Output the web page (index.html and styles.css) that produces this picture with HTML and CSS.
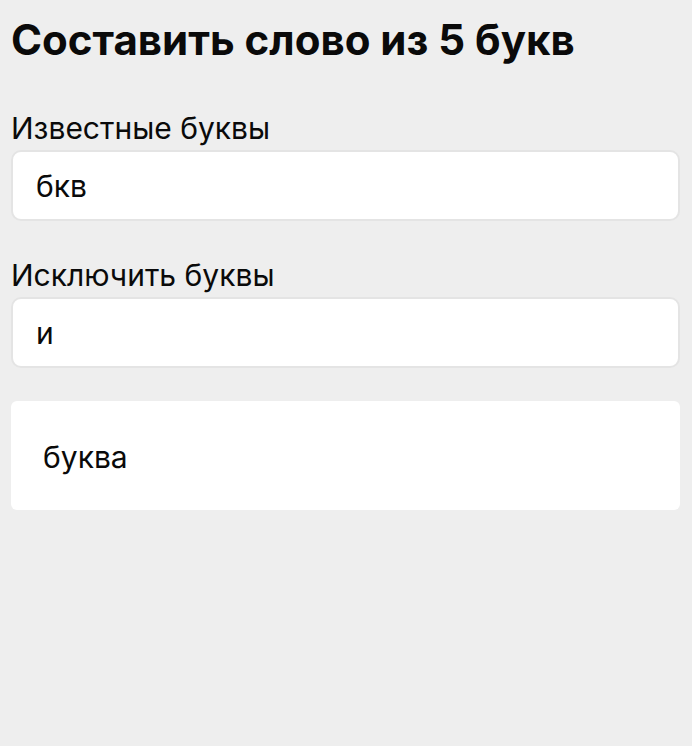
FILE: index.html
```html
<!DOCTYPE html>
<html lang="ru">
<head>
    <meta charset="UTF-8">
    <title>Составить слово из 5 букв</title>
    <link rel="stylesheet" href="styles.css">
</head>
<body>
    <h1>Составить слово из 5 букв</h1>
    <div class="field">
        <label for="known">Известные буквы</label>
        <input type="text" id="known" value="бкв">
    </div>
    <div class="field">
        <label for="exclude">Исключить буквы</label>
        <input type="text" id="exclude" value="и">
    </div>
    <div class="results">
        <div class="word">буква</div>
    </div>
</body>
</html>
```
FILE: styles.css
```css
body {
    font-family: 'Inter', 'Noto Sans', sans-serif;
    background-color: #eeeeee;
    color: #0a0a0a;
    margin: 0;
    padding: 15px 12px 0 11px;
}
h1 {
    font-size: 42px;
    line-height: 50px;
    font-weight: 700;
    margin: 0 0 46px 0;
}
.field {
    margin-bottom: 37px;
}
.field label {
    display: block;
    font-size: 30px;
    line-height: 34px;
    margin-bottom: 5px;
}
.field input {
    display: block;
    width: 100%;
    box-sizing: border-box;
    height: 71px;
    padding: 0 23px;
    font-family: inherit;
    font-size: 30px;
    color: #0a0a0a;
    background: white;
    border: 2px solid #e4e4e4;
    border-radius: 10px;
    outline: none;
}
.field + .field {
    margin-bottom: 33px;
}
.results {
    background: white;
    border-radius: 6px;
    padding: 0 32px;
}
.word {
    font-size: 30px;
    line-height: 106px;
    padding-top: 3px;
}
```
